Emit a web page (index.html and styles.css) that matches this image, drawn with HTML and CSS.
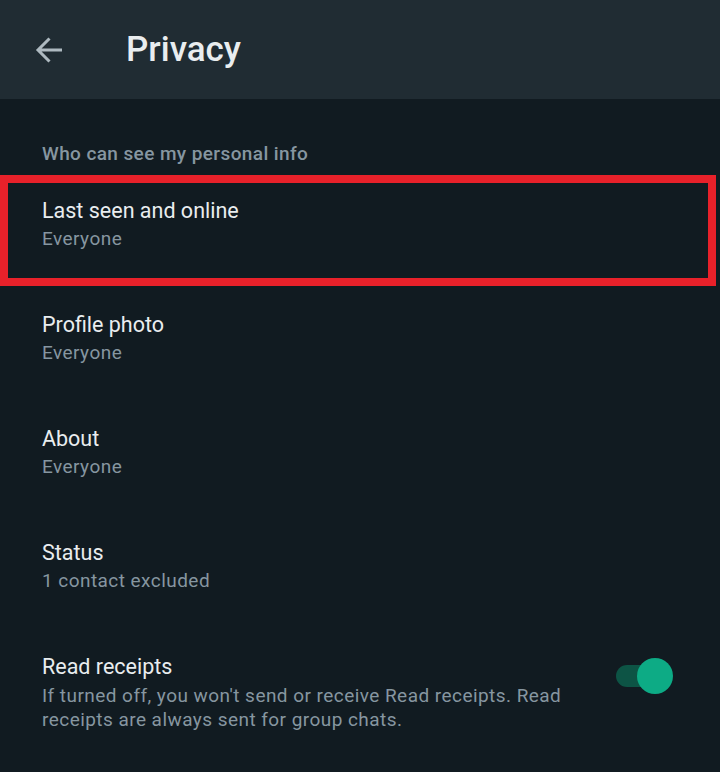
FILE: index.html
```html
<!DOCTYPE html>
<html>
<head>
<meta charset="utf-8">
<link rel="stylesheet" href="styles.css">
</head>
<body>
<div class="app">
  <header class="topbar">
    <svg class="back" width="28" height="28" viewBox="0 0 28 28"><path d="M27 14H3.5M14.5 2.5L3 14l11.5 11.5" fill="none" stroke="#aebac1" stroke-width="3"/></svg>
    <h1 class="title">Privacy</h1>
  </header>
  <main class="content">
    <div class="section-title">Who can see my personal info</div>
    <div class="item highlighted">
      <div class="item-text">
        <div class="item-title">Last seen and online</div>
        <div class="item-sub">Everyone</div>
      </div>
      <div class="highlight-box"></div>
    </div>
    <div class="item">
      <div class="item-text">
        <div class="item-title">Profile photo</div>
        <div class="item-sub">Everyone</div>
      </div>
    </div>
    <div class="item">
      <div class="item-text">
        <div class="item-title">About</div>
        <div class="item-sub">Everyone</div>
      </div>
    </div>
    <div class="item">
      <div class="item-text">
        <div class="item-title">Status</div>
        <div class="item-sub">1 contact excluded</div>
      </div>
    </div>
    <div class="item">
      <div class="item-text">
        <div class="item-title">Read receipts</div>
        <div class="item-desc">If turned off, you won't send or receive Read receipts. Read receipts are always sent for group chats.</div>
      </div>
      <div class="toggle"><div class="knob"></div></div>
    </div>
  </main>
</div>
</body>
</html>
```

FILE: styles.css
```css
html, body {
  margin: 0;
  padding: 0;
  background: #111b21;
  font-family: Roboto, "Noto Sans", sans-serif;
}
.app {
  width: 720px;
  height: 772px;
  overflow: hidden;
  background: #111b21;
}
.topbar {
  height: 99px;
  background: #202c33;
  display: flex;
  align-items: center;
  box-sizing: border-box;
  padding-left: 35px;
}
.back {
  display: block;
  margin-top: 1px;
}
.title {
  margin: 0 0 0 63px;
  font-size: 35px;
  font-weight: 500;
  color: #e9edef;
  line-height: 40px;
  margin-top: 0;
}
.section-title {
  padding: 43px 42px 3px;
  font-size: 19px;
  letter-spacing: 0.4px;
  line-height: 24px;
  color: #8696a0;
  font-weight: 500;
}
.item {
  position: relative;
  display: flex;
  align-items: flex-start;
  padding: 28px 42px 30px;
}
.item-text {
  flex: 1;
}
.item-title {
  font-size: 21.5px;
  line-height: 28px;
  color: #e9edef;
}
.item-sub {
  font-size: 19px;
  letter-spacing: 0.45px;
  line-height: 28px;
  color: #8696a0;
}
.item-desc {
  font-size: 19px;
  letter-spacing: 0.45px;
  line-height: 23.5px;
  color: #8696a0;
  margin-top: 3px;
  max-width: 540px;
}
.highlight-box {
  position: absolute;
  left: 0;
  top: 6px;
  width: 716px;
  height: 111px;
  box-sizing: border-box;
  border: 8.5px solid #e8212a;
}
.toggle {
  position: relative;
  width: 46px;
  height: 22px;
  border-radius: 11px;
  background: #0d5445;
  margin-right: 16px;
  margin-top: 12px;
}
.knob {
  position: absolute;
  right: -11px;
  top: -7px;
  width: 36px;
  height: 36px;
  border-radius: 50%;
  background: #0dab85;
}
```
